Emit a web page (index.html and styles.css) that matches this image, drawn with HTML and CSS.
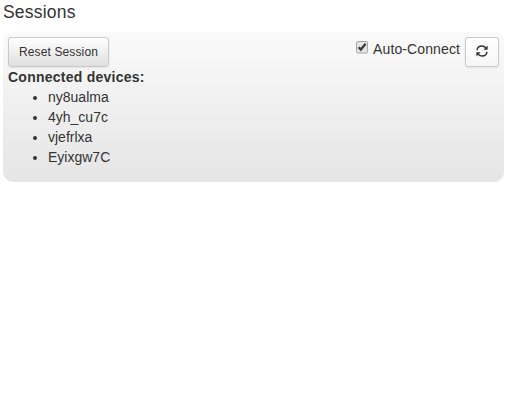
FILE: index.html
```html
<!DOCTYPE html>
<html lang="en">
<head>
<meta charset="utf-8">
<title>Sessions</title>
<link rel="stylesheet" href="styles.css">
</head>
<body>
<h1 class="title"><span>Sessions</span></h1>
<section class="panel">
  <div class="toolbar">
    <button class="btn reset" type="button"><span>Reset Session</span></button>
    <div class="actions">
      <label class="auto">
        <svg class="check" width="12" height="13" viewBox="0 0 12 13" aria-hidden="true">
          <rect x=".5" y=".5" width="11" height="11.500" rx="1.5" fill="#e6e6e6" stroke="#a5a5a5"/>
          <path d="M2.600 6.200 4.800 8.600 9.600 2.800" fill="none" stroke="#404040" stroke-width="2.400"/>
        </svg>
        <span class="auto-text">Auto-Connect</span>
      </label>
      <button class="btn refresh" type="button" aria-label="Refresh">
        <svg width="12" height="12" viewBox="0 0 12 12" aria-hidden="true">
          <path d="M1 5.200C1.300 2.700 3.300 1 5.800 1c1.600 0 2.900.600 3.900 1.800M11 6.800C10.700 9.300 8.700 11 6.200 11c-1.600 0-2.900-.600-3.900-1.800" fill="none" stroke="#333" stroke-width="1.400"/>
          <path d="M11.600.600v4.200H7.400zM.400 11.400V7.200h4.200z" fill="#333"/>
        </svg>
      </button>
    </div>
  </div>
  <p class="label"><span>Connected devices:</span></p>
  <ul class="devices">
    <li><span>ny8ualma</span></li>
    <li><span>4yh_cu7c</span></li>
    <li><span>vjefrlxa</span></li>
    <li><span>Eyixgw7C</span></li>
  </ul>
</section>
</body>
</html>
```
FILE: styles.css
```css
body {
  margin: 0;
  background: #fff;
  color: #333;
  font: 14px/20px "Liberation Sans", Arial, sans-serif;
}
.title {
  margin: 0 3px;
  height: 32px;
  font-weight: 400;
  font-size: 17.5px;
  line-height: 24px;
  letter-spacing: .2px;
}
.panel {
  box-sizing: border-box;
  width: 501px;
  height: 150px;
  margin-left: 3px;
  padding: 5px;
  border-radius: 10px;
  background: linear-gradient(#fafafa, #e5e5e5);
}
.toolbar {
  display: flex;
  justify-content: space-between;
  height: 30px;
}
.actions {
  display: flex;
  gap: 5px;
}
.auto {
  display: flex;
  align-items: flex-start;
  gap: 5px;
}
.check {
  margin-top: 4px;
}
.auto-text {
  line-height: 24px;
  letter-spacing: .11px;
}
.btn {
  box-sizing: border-box;
  height: 30px;
  padding: 0;
  border: 1px solid #c9c9c9;
  border-radius: 3px;
  background: linear-gradient(#fff, #dfdfdf);
  box-shadow: 0 1px 2px rgba(0, 0, 0, .07);
  color: #333;
  font: 12px/28px "Liberation Sans", Arial, sans-serif;
}
.reset {
  width: 101px;
  letter-spacing: .12px;
}
.refresh {
  display: flex;
  align-items: center;
  justify-content: center;
  width: 34px;
  padding-bottom: 2px;
  background: linear-gradient(#fff, #f6f6f6);
}
.label {
  margin: 0;
  font-weight: 700;
  letter-spacing: .25px;
}
.devices {
  margin: 0;
  padding-left: 40px;
}
```
